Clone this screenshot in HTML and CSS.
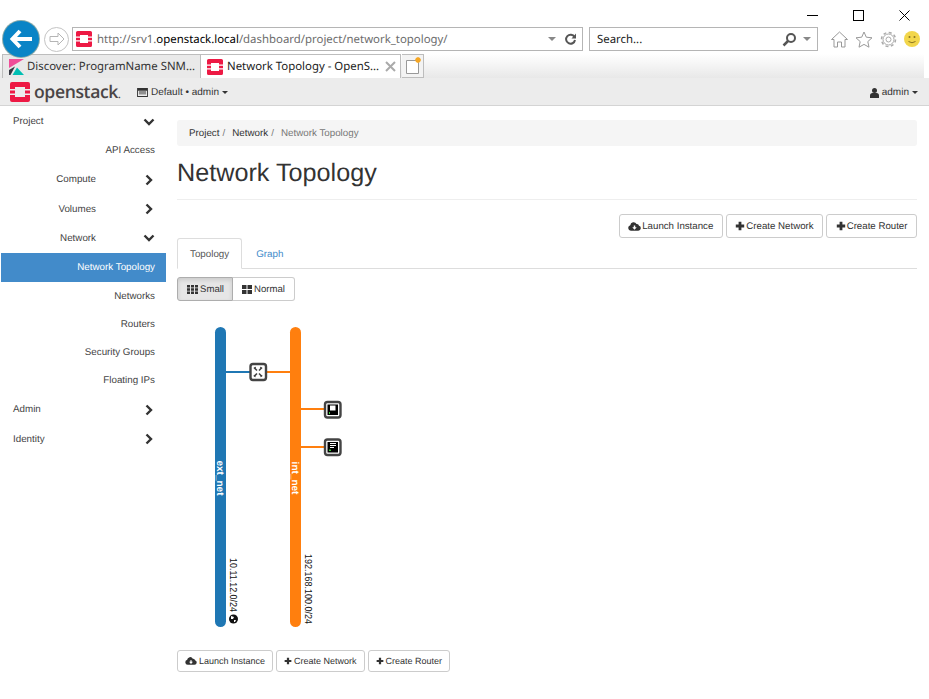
FILE: index.html
```html
<!DOCTYPE html>
<html lang="en">

<head>
    <meta charset="UTF-8">
    <meta name="viewport" content="width=device-width, initial-scale=1.0">
    <title>Network Topology</title>
    <link rel="stylesheet" href="styles.css">
</head>

<body>
    <svg class="defs" width="0" height="0">
        <symbol id="os" viewBox="0 0 20 20">
            <path fill="#ed1944" d="M2 0h16a2 2 0 0 1 2 2v5h-5V5H5v2H0V2a2 2 0 0 1 2-2zM0 8.500h5v3H0zM15 8.500h5v3h-5zM0 13h5v2h10v-2h5v5a2 2 0 0 1-2 2H2a2 2 0 0 1-2-2z"/>
        </symbol>
        <symbol id="cloud" viewBox="0 0 14 12">
            <path fill="#333" d="M3 10.500a3 3 0 0 1-.6-5.900 3.600 3.600 0 0 1 6.800-1.300 2.400 2.400 0 0 1 2.700 1.900 2.700 2.700 0 0 1-.7 5.300z"/>
            <path fill="#fff" d="M7 9.500 4.600 6.900h1.600V5h1.600v1.900h1.600z"/>
        </symbol>
        <symbol id="plus" viewBox="0 0 10 10">
            <path fill="#333" d="M3.600.8h2.800v2.800h2.800v2.800H6.400v2.800H3.600V6.400H.8V3.600h2.800z"/>
        </symbol>
        <symbol id="down" viewBox="0 0 12 12">
            <path fill="none" stroke="#333" stroke-width="2.400" d="M1.500 3.500 6 8l4.500-4.500"/>
        </symbol>
        <symbol id="right" viewBox="0 0 12 12">
            <path fill="none" stroke="#333" stroke-width="2.400" d="M3.500 1.500 8 6l-4.500 4.500"/>
        </symbol>
    </svg>

    <header class="chrome">
        <div class="winctl">
            <svg width="11" height="11" viewBox="0 0 11 11"><path stroke="#000" d="M0 5.500h11"/></svg>
            <svg width="11" height="11" viewBox="0 0 11 11"><rect x=".5" y=".5" width="10" height="10" fill="none" stroke="#000"/></svg>
            <svg width="11" height="11" viewBox="0 0 11 11"><path stroke="#000" d="M.5.5l10 10M10.500.5l-10 10"/></svg>
        </div>
        <div class="addr-row">
            <div class="back">
                <svg width="24" height="20" viewBox="0 0 24 20"><path fill="none" stroke="#fff" stroke-width="4" d="M11 2 3.500 10l7.500 8M4 10h19"/></svg>
            </div>
            <div class="forward">
                <svg width="16" height="14" viewBox="0 0 16 14"><path fill="none" stroke="#b5b5b5" d="M9 1l6 6-6 6V9.500H1v-5h8z"/></svg>
            </div>
            <div class="addr">
                <svg class="fav" width="16" height="16"><use href="#os"/></svg>
                <span class="url">http://srv1.<b>openstack.local</b>/dashboard/project/network_topology/</span>
                <span class="caret-gray"></span>
                <svg width="13" height="13" viewBox="0 0 13 13"><path fill="none" stroke="#555" stroke-width="2" d="M10.500 4a4.500 4.500 0 1 0 .5 3"/><path fill="#555" d="M12 .5v5H7.500z"/></svg>
            </div>
            <div class="search">
                <span class="search-text">Search...</span>
                <svg width="15" height="15" viewBox="0 0 15 15"><circle cx="9" cy="6" r="4" fill="none" stroke="#555" stroke-width="2"/><path stroke="#555" stroke-width="2.500" d="M6 9l-4.500 4.500"/></svg>
                <span class="caret-gray"></span>
            </div>
            <div class="tools">
                <svg width="17" height="17" viewBox="0 0 17 17"><path fill="none" stroke="#999" d="M.5 8.500l8-7.500 8 7.500H14V16h-3.500v-5h-4v5H3V8.500z"/></svg>
                <svg width="18" height="17" viewBox="0 0 18 17"><path fill="none" stroke="#999" d="M9 1l2.300 5.200 5.700.6-4.200 3.800 1.200 5.600L9 13.400l-5 2.800 1.200-5.600L1 6.800l5.700-.6z"/></svg>
                <svg width="17" height="17" viewBox="0 0 17 17"><circle cx="8.500" cy="8.500" r="2.500" fill="none" stroke="#aaa"/><circle cx="8.500" cy="8.500" r="5.500" fill="none" stroke="#aaa"/><circle cx="8.500" cy="8.500" r="7" fill="none" stroke="#aaa" stroke-width="1.500" stroke-dasharray="3 2.500"/></svg>
                <svg width="16" height="16" viewBox="0 0 16 16"><circle cx="8" cy="8" r="8" fill="#f2d64b"/><circle cx="5.500" cy="6" r="1" fill="#8a7420"/><circle cx="10.500" cy="6" r="1" fill="#8a7420"/><path fill="none" stroke="#8a7420" d="M4.500 10.500q3.500 2.500 7 0"/></svg>
            </div>
        </div>
        <div class="tab-row">
            <div class="tab tab-off">
                <svg width="16" height="16" viewBox="0 0 16 16"><path fill="#f04e98" d="M0 0h15L0 9z"/><path fill="#343741" d="M0 16V11l6-3.500L1.500 16z"/><path fill="#00bfb3" d="M3.500 16 8 8.500 15 16z"/></svg>
                <span>Discover: ProgramName SNM...</span>
            </div>
            <div class="tab tab-on">
                <svg width="16" height="16"><use href="#os"/></svg>
                <span>Network Topology - OpenS...</span>
                <svg class="tab-x" width="11" height="11" viewBox="0 0 11 11"><path stroke="#aaa" stroke-width="2" d="M1 1l9 9M10 1l-9 9"/></svg>
            </div>
            <div class="tab-new">
                <svg width="18" height="17" viewBox="0 0 18 17"><path fill="#fff" stroke="#999" d="M1.500 3.500h10l2 2v11h-12z"/><path stroke="#f5a623" stroke-width="1.500" d="M13 0v6M10 3h6M11 1l4 4M15 1l-4 4"/></svg>
            </div>
        </div>
    </header>

    <nav class="topbar">
        <svg width="20" height="20" class="logo-mark"><use href="#os"/></svg>
        <span class="logo-text">openstack<i>.</i></span>
        <span class="project-pick">
            <svg width="11" height="9" viewBox="0 0 12 10"><path fill="#333" d="M0 0h12v10H0zM1 3v6h10V3z"/><path fill="#333" d="M2 4h8v1H2zM2 6h8v1H2z"/></svg>
            Default • admin <span class="caret"></span>
        </span>
        <span class="user-pick">
            <svg width="9" height="10" viewBox="0 0 9 10"><circle cx="4.500" cy="2.500" r="2.500" fill="#333"/><path fill="#333" d="M0 10V7.500Q0 5 2.500 5h4Q9 5 9 7.500V10z"/></svg>
            admin <span class="caret"></span>
        </span>
    </nav>

    <div class="layout">
        <aside class="sidebar">
            <a class="side-item lvl0">Project <svg width="12" height="12"><use href="#down"/></svg></a>
            <a class="side-item">API Access</a>
            <a class="side-item">Compute <svg width="12" height="12"><use href="#right"/></svg></a>
            <a class="side-item tall">Volumes <svg width="12" height="12"><use href="#right"/></svg></a>
            <a class="side-item tall sub">Network <svg width="12" height="12"><use href="#down"/></svg></a>
            <a class="side-item active">Network Topology</a>
            <a class="side-item short sub">Networks</a>
            <a class="side-item short sub">Routers</a>
            <a class="side-item short sub">Security Groups</a>
            <a class="side-item short sub">Floating IPs</a>
            <a class="side-item lvl0">Admin <svg width="12" height="12"><use href="#right"/></svg></a>
            <a class="side-item lvl0 tall">Identity <svg width="12" height="12"><use href="#right"/></svg></a>
        </aside>

        <main class="content">
            <ol class="breadcrumb">
                <li>Project</li>
                <li>Network</li>
                <li class="current">Network Topology</li>
            </ol>
            <h1 class="page-title">Network Topology</h1>
            <div class="actions actions-right">
                <a class="btn"><svg width="13" height="11"><use href="#cloud"/></svg> Launch Instance</a>
                <a class="btn"><svg width="10" height="10"><use href="#plus"/></svg> Create Network</a>
                <a class="btn"><svg width="10" height="10"><use href="#plus"/></svg> Create Router</a>
            </div>
            <ul class="tabs">
                <li class="tabs-on">Topology</li>
                <li class="tabs-link">Graph</li>
            </ul>
            <div class="btn-group">
                <a class="btn pressed">
                    <svg width="11" height="9" viewBox="0 0 11 9"><path fill="#333" d="M0 0h3v2.500H0zM4 0h3v2.500H4zM8 0h3v2.500H8zM0 3.250h3v2.500H0zM4 3.250h3v2.500H4zM8 3.250h3v2.500H8zM0 6.500h3V9H0zM4 6.500h3V9H4zM8 6.500h3V9H8z"/></svg>
                    Small
                </a>
                <a class="btn">
                    <svg width="10" height="9" viewBox="0 0 10 9"><path fill="#333" d="M0 0h4.500v4H0zM5.500 0H10v4H5.500zM0 5h4.500v4H0zM5.500 5H10v4H5.500z"/></svg>
                    Normal
                </a>
            </div>
            <svg class="topology" width="740" height="320" viewBox="0 0 740 320">
                <path stroke="#1f77b4" stroke-width="2" d="M49 52h24"/>
                <path stroke="#ff7f0e" stroke-width="2" d="M89 52h25M124 89h24M124 127h24"/>
                <rect x="38" y="7" width="11" height="300" rx="5.500" fill="#1f77b4"/>
                <rect x="113" y="7" width="11" height="300" rx="5.500" fill="#ff7f0e"/>
                <text class="net-name" transform="translate(40,158) rotate(90)" text-anchor="middle">ext_net</text>
                <text class="net-name" transform="translate(115,158) rotate(90)" text-anchor="middle">int_net</text>
                <text class="net-cidr" transform="translate(53,238) rotate(90)" textLength="54" lengthAdjust="spacingAndGlyphs">10.11.12.0/24</text>
                <text class="net-cidr" transform="translate(128,234) rotate(90)" textLength="70" lengthAdjust="spacingAndGlyphs">192.168.100.0/24</text>
                <circle cx="56.500" cy="299" r="4.500" fill="#111"/>
                <path fill="#fff" d="M54 296l3 1-1 2-2 0zM57 300l2 0-1 2-1 0z"/>

                <rect x="73.500" y="44" width="15.500" height="16" rx="2.500" fill="#fff" stroke="#444" stroke-width="2.400"/>
                <path stroke="#444" stroke-width="1.600" d="M77 47.500l3 3M85 47.500l-3 3M77 56.500l3-3M85 56.500l-3-3"/>
                <path fill="#444" d="M79 46.500v2h-2zM83 46.500v2h2zM76.500 55h2v2.500zM85.500 55h-2v2.500z"/>

                <rect x="148" y="82" width="15.500" height="15.500" rx="2.500" fill="#fff" stroke="#444" stroke-width="2.400"/>
                <rect x="150.500" y="84.500" width="10.500" height="10.500" fill="#000"/>
                <rect x="153" y="85.500" width="5.500" height="5" fill="#fff"/>
                <rect x="152" y="92" width="1" height="2" fill="#3c3"/>

                <rect x="148" y="119.500" width="15.500" height="15.500" rx="2.500" fill="#fff" stroke="#444" stroke-width="2.400"/>
                <rect x="150.500" y="122" width="10.500" height="10.500" fill="#000"/>
                <path stroke="#fff" d="M153 123.500h6M153 125.500h6M153 127.500h4"/>
                <rect x="152" y="129.500" width="2" height="1.500" fill="#3c3"/>
            </svg>
            <div class="actions actions-bottom">
                <a class="btn"><svg width="12" height="10"><use href="#cloud"/></svg> Launch Instance</a>
                <a class="btn"><svg width="8" height="8"><use href="#plus"/></svg> Create Network</a>
                <a class="btn"><svg width="8" height="8"><use href="#plus"/></svg> Create Router</a>
            </div>
        </main>
    </div>
</body>

</html>
```
FILE: styles.css
```css
body {
    margin: 0;
    background-color: #fff;
    font-family: "Liberation Sans", Arial, sans-serif;
    font-size: 9.800px;
    color: #333;
    overflow: hidden;
    text-rendering: geometricPrecision;
}
a {
    color: inherit;
}
svg {
    display: block;
    flex: none;
}
.defs {
    position: absolute;
}

/* browser window */
.chrome {
    height: 78px;
    font-family: "Noto Sans", "Open Sans", sans-serif;
    font-size: 11.400px;
}
.winctl {
    display: flex;
    justify-content: flex-end;
    gap: 35px;
    height: 27px;
    padding: 10px 19px 0 0;
    box-sizing: border-box;
}
.addr-row {
    display: flex;
    align-items: center;
    height: 24px;
}
.back {
    width: 36px;
    height: 36px;
    margin-left: 3px;
    border-radius: 50%;
    background-color: #0a84c6;
    display: flex;
    align-items: center;
    justify-content: center;
    z-index: 1;
    box-shadow: 0 0 0 1px #8aa;
}
.forward {
    width: 25px;
    height: 25px;
    margin-left: 5px;
    border: 1px solid #c4c4c4;
    border-radius: 50%;
    display: flex;
    align-items: center;
    justify-content: center;
    box-sizing: border-box;
}
.addr {
    width: 511px;
    height: 24px;
    box-sizing: border-box;
    margin-left: 3px;
    border: 1px solid #b5b5b5;
    display: flex;
    align-items: center;
    padding: 0 5px 0 3px;
}
.fav {
    margin-right: 5px;
}
.url {
    flex: 1;
    color: #6d6d6d;
    white-space: nowrap;
}
.url b {
    font-weight: normal;
    color: #000;
}
.caret-gray {
    width: 0;
    height: 0;
    margin-right: 8px;
    border: 4px solid transparent;
    border-top-color: #888;
    border-bottom: 0;
}
.search {
    width: 229px;
    height: 24px;
    box-sizing: border-box;
    margin-left: 6px;
    border: 1px solid #b5b5b5;
    display: flex;
    align-items: center;
    padding-left: 7px;
    gap: 3px;
}
.search .caret-gray {
    margin: 0 6px 0 3px;
}
.search-text {
    flex: 1;
    color: #222;
}
.tools {
    display: flex;
    align-items: center;
    gap: 7px;
    margin-left: 13px;
}
.tab-row {
    display: flex;
    height: 24px;
    margin-top: 3px;
    margin-right: 5px;
    padding-left: 2px;
    background: linear-gradient(#fff, #e8e8e8);
}
.tab {
    display: flex;
    align-items: center;
    width: 199px;
    box-sizing: border-box;
    padding: 0 4px 0 6px;
    gap: 2px;
    border: 1px solid #bdbdbd;
    border-bottom: 0;
    white-space: nowrap;
}
.tab span {
    flex: 1;
}
.tab-off {
    background-color: #e9e9e9;
    color: #333;
}
.tab-on {
    width: 200px;
    gap: 4px;
    background-color: #fff;
    color: #222;
    border-left: 0;
}
.tab-new {
    width: 22px;
    margin-left: 1px;
    box-sizing: border-box;
    border: 1px solid #bdbdbd;
    border-left: 0;
    background-color: #f3f3f3;
    padding: 2px 0 0 3px;
}

/* openstack top bar */
.topbar {
    display: flex;
    align-items: center;
    height: 28px;
    box-sizing: border-box;
    padding: 0 11px 0 10px;
    background-color: #ececec;
    border-bottom: 1px solid #d4d4d4;
    font-size: 10px;
}
.logo-text {
    width: 87px;
    margin-left: 4px;
    font-family: "Open Sans", "Liberation Sans", sans-serif;
    font-size: 17.600px;
    font-weight: 600;
    letter-spacing: -.4px;
    color: #4a4546;
}
.logo-text i {
    font-style: normal;
    font-size: 10px;
}
.project-pick, .user-pick {
    display: flex;
    align-items: center;
    gap: 3px;
    padding-top: 2px;
}
.project-pick {
    margin-left: 16px;
    flex: 1;
}
.caret {
    width: 0;
    height: 0;
    border: 3px solid transparent;
    border-top: 3px solid #333;
    border-bottom: 0;
}

/* page */
.layout {
    display: flex;
}
.sidebar {
    width: 166px;
    flex: none;
    padding-left: 1px;
    box-sizing: border-box;
}
.side-item {
    display: flex;
    align-items: center;
    justify-content: flex-end;
    height: 29px;
    box-sizing: border-box;
    padding: 2px 11px 0 0;
    gap: 47px;
    color: #444;
}
.tall {
    height: 30px;
}
.short {
    height: 28px;
}
.sub {
    padding-top: 0;
}
.lvl0 {
    justify-content: space-between;
    padding-left: 12px;
}
.active {
    padding-top: 0;
    background-color: #428bca;
    color: #fff;
}
.content {
    flex: 1;
    min-width: 0;
    padding: 14px 12px 0 11px;
}
.breadcrumb {
    display: flex;
    height: 26px;
    align-items: center;
    margin: 0;
    padding: 0 12px;
    box-sizing: border-box;
    list-style: none;
    background-color: #f5f5f5;
    border-radius: 3px;
}
.breadcrumb li + li::before {
    content: "/";
    padding: 0 7px 0 3px;
    color: #777;
}
.current {
    color: #777;
}
.page-title {
    margin: 0;
    height: 54px;
    padding-top: 12px;
    box-sizing: border-box;
    border-bottom: 1px solid #eee;
    font-size: 25.200px;
    font-weight: 500;
    line-height: 30px;
}
.actions {
    display: flex;
    gap: 3px;
}
.actions-right {
    justify-content: flex-end;
    margin-top: 14px;
    font-size: 9.700px;
}
.btn {
    display: flex;
    align-items: center;
    height: 24px;
    box-sizing: border-box;
    padding: 0 8.500px;
    gap: 1px;
    background-color: #fff;
    border: 1px solid #ccc;
    border-radius: 3px;
    white-space: nowrap;
}
.actions-bottom .btn {
    height: 22px;
    padding: 0 7px;
    gap: 2px;
    font-size: 9px;
}
.tabs {
    display: flex;
    margin: 0;
    padding: 0;
    height: 31px;
    box-sizing: border-box;
    list-style: none;
    border-bottom: 1px solid #ddd;
}
.tabs li {
    height: 31px;
    box-sizing: border-box;
    padding: 0 12px;
    line-height: 32px;
}
.tabs-on {
    color: #555;
    background-color: #fff;
    border: 1px solid #ddd;
    border-bottom-color: #fff;
    border-radius: 3px 3px 0 0;
}
.tabs .tabs-link {
    margin-left: 2px;
    padding-top: 1px;
    color: #428bca;
}
.btn-group {
    display: flex;
    margin-top: 8px;
    font-size: 9.600px;
}
.btn-group .btn {
    padding: 0 9px;
    gap: 2px;
}
.btn-group .btn:first-child {
    padding-right: 8px;
    border-radius: 3px 0 0 3px;
}
.btn-group .btn:last-child {
    border-left: 0;
    border-radius: 0 3px 3px 0;
}
.pressed {
    background-color: #e6e6e6;
    border-color: #adadad;
    box-shadow: inset 0 2px 4px rgba(0, 0, 0, .125);
}
.topology {
    margin-top: 19px;
    margin-bottom: 10px;
}
.net-name {
    font-size: 10px;
    font-weight: bold;
    fill: #fff;
}
.net-cidr {
    font-size: 10px;
    fill: #111;
}
```
